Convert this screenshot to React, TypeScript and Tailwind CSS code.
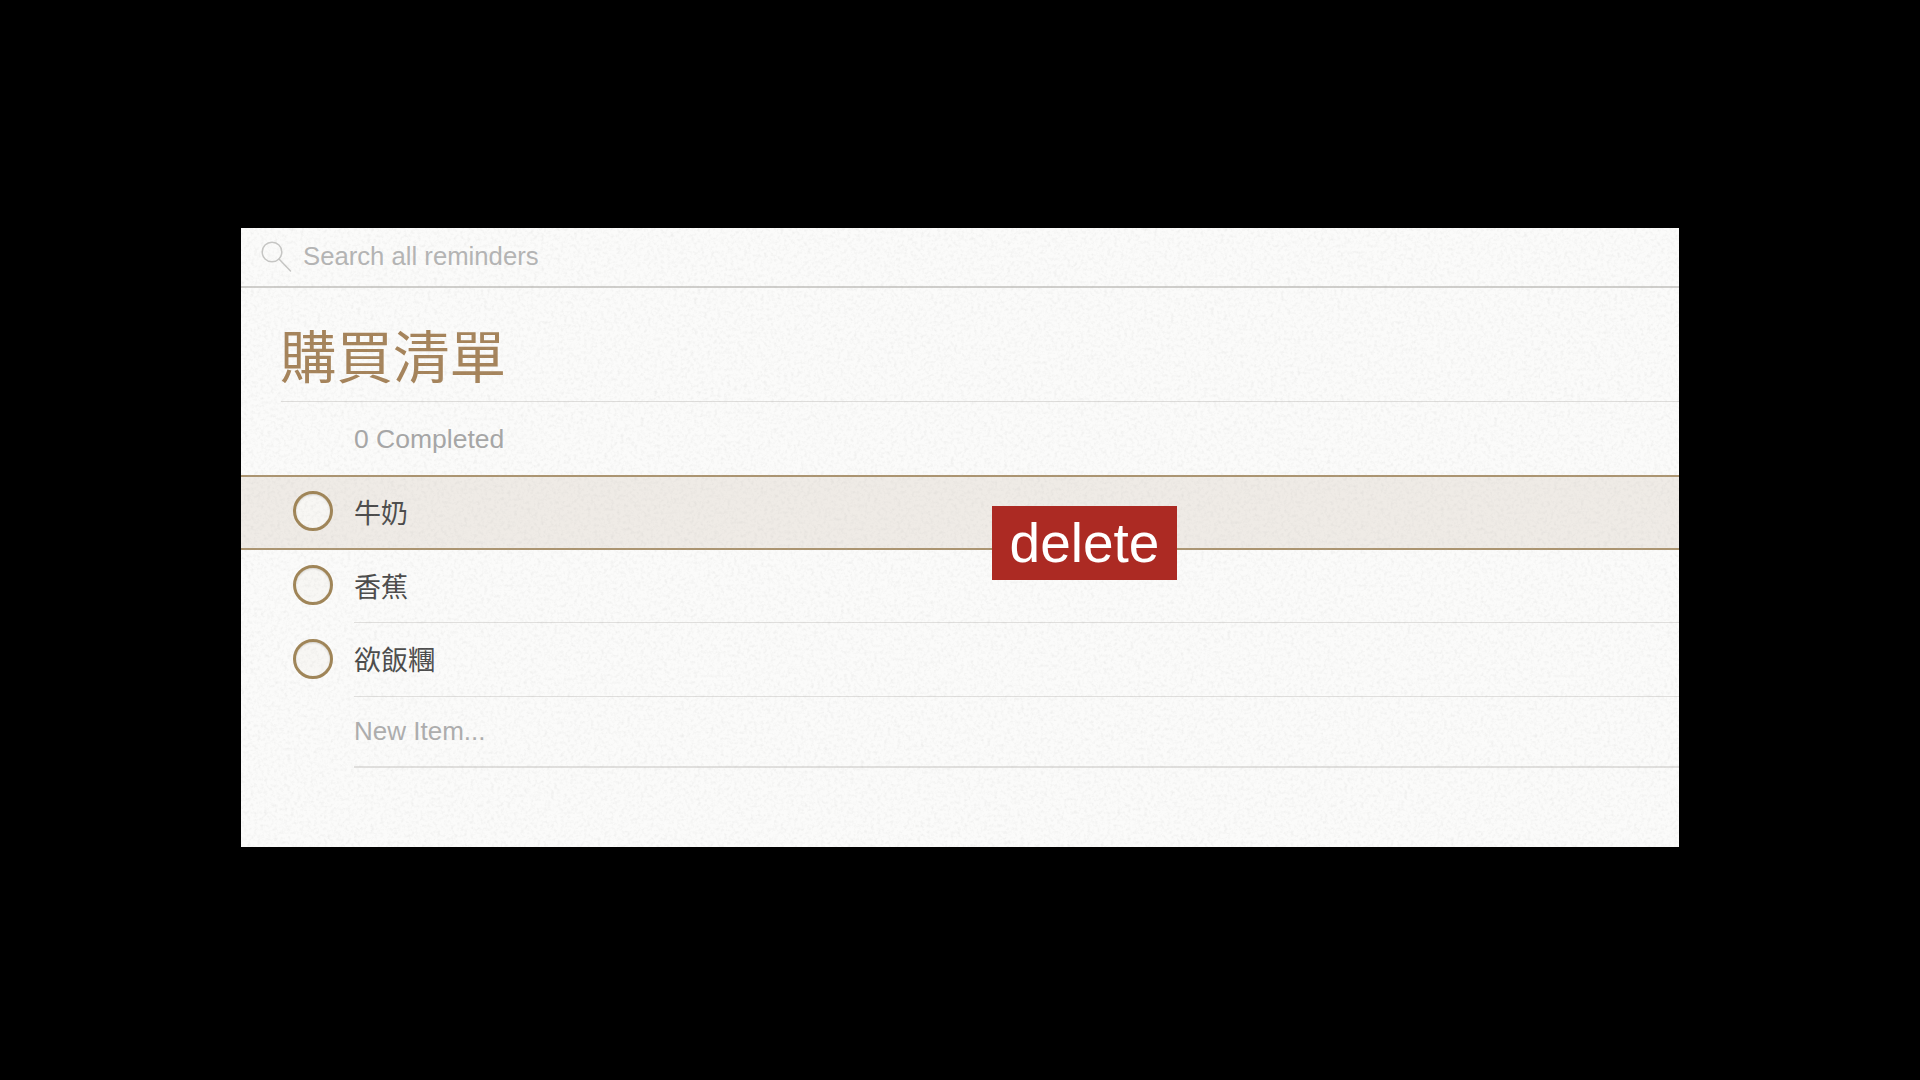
import React from "react";

const cjk = "font-['Liberation_Sans','Noto_Sans_CJK_TC',sans-serif]";

function Ring() {
  return (
    <div className="w-10 h-10 rounded-full border-[3px] border-[#9f8456] bg-[#f8f7f4] shrink-0 shadow-[inset_0_1px_2px_rgba(0,0,0,0.14)]" />
  );
}

function Row({ text, h }: { text: string; h: string }) {
  return (
    <div className={`flex items-stretch ${h}`}>
      <div className="w-[113px] pl-[52px] pb-[3px] flex items-center shrink-0">
        <Ring />
      </div>
      <div className="flex-1 flex items-center text-[27px] text-[#4b4b4b] border-b border-[#e0dfdd]">
        <span className="pt-[4px]">{text}</span>
      </div>
    </div>
  );
}

export default function App() {
  return (
    <div className={`w-full h-screen bg-black pt-[228px] pl-[241px] overflow-hidden ${cjk}`}>
      <div className="relative w-[1438px] h-[619px] bg-[#fbfbfa] overflow-hidden">
        <div className="flex items-center h-[60px] border-b-2 border-[#cfcecb] pl-[20px] gap-[11px]">
          <svg width="31" height="32" viewBox="0 0 31 32" fill="none" stroke="#c6c6c4" strokeWidth="1.5" className="shrink-0">
            <circle cx="11" cy="11" r="9.8" />
            <path d="M18 18 L29.5 30" strokeLinecap="round" />
          </svg>
          <span className="text-[25.7px] text-[#b4b4b4] pb-[2px]">Search all reminders</span>
        </div>

        <div className="ml-[40px] h-[114px] border-b border-[#dedddb] flex items-center">
          <span className="text-[56.5px] leading-none text-[#a5835a] pt-[30px] -ml-[1px]">購買清單</span>
        </div>

        <div className="h-[73px] pl-[113px] flex items-center text-[26.5px] text-[#a6a6a6] pt-[2px]">0 Completed</div>

        <div className="relative h-[75px] bg-[#efebe6] border-y-2 border-[#ab9470]">
          <div className="flex h-full items-center">
            <div className="w-[113px] pl-[52px] pb-[3px] flex items-center shrink-0">
              <Ring />
            </div>
            <span className="text-[27px] text-[#4b4b4b] pt-[3px]">牛奶</span>
          </div>
          <div className="absolute left-[751px] top-[29px] w-[185px] h-[74px] bg-[#ac2a23] text-white text-[55px] flex items-center justify-center z-10">
            delete
          </div>
        </div>

        <Row text="香蕉" h="h-[73px]" />
        <Row text="欲飯糰" h="h-[74px]" />

        <div className="ml-[113px] h-[71px] border-b-2 border-[#e0dfdd] flex items-center text-[26px] text-[#adadad]">New Item...</div>

        <svg className="absolute inset-0 pointer-events-none" width="1438" height="619">
          <filter id="paper">
            <feTurbulence type="fractalNoise" baseFrequency="0.3" numOctaves="3" seed="4" />
            <feColorMatrix values="0 0 0 0 0.42  0 0 0 0 0.42  0 0 0 0 0.41  0.22 0.22 0 0 -0.2" />
          </filter>
          <rect width="1438" height="619" filter="url(#paper)" />
        </svg>
      </div>
    </div>
  );
}
